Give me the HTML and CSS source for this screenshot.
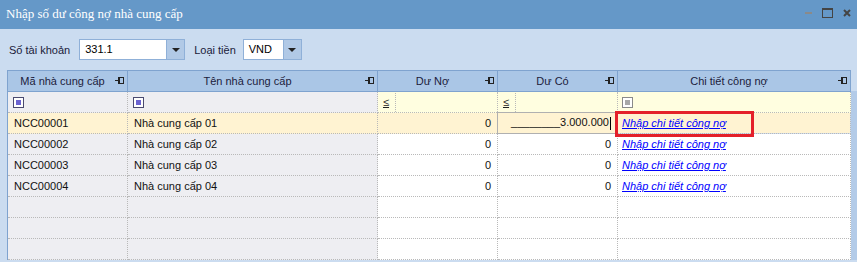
FILE: index.html
```html
<!doctype html>
<html lang="vi">
<head>
  <meta charset="utf-8" />
  <title>Nhập số dư công nợ nhà cung cấp</title>
  <link rel="stylesheet" href="styles.css">
</head>
<body>
  <div class="titlebar">
    <span class="title">Nhập số dư công nợ nhà cung cấp</span>
    <div class="winbtns">
      <span class="wmin"></span>
      <span class="wmax"></span>
      <svg class="wclose" width="8" height="8" viewBox="0 0 8 8"><path d="M1 1L7 7M7 1L1 7" stroke="#444" stroke-width="2"/></svg>
    </div>
  </div>

  <div class="toolbar">
    <label class="lbl">Số tài khoản</label>
    <div class="combo c1"><span class="val">331.1</span><span class="drop"><i></i></span></div>
    <label class="lbl">Loại tiền</label>
    <div class="combo c2"><span class="val">VND</span><span class="drop"><i></i></span></div>
  </div>

  <div class="gridwrap">
    <table class="grid">
      <colgroup>
        <col class="w1"><col class="w2"><col class="w3"><col class="w4"><col class="w5">
      </colgroup>
      <thead>
        <tr>
          <th>Mã nhà cung cấp<span class="pin"></span></th>
          <th>Tên nhà cung cấp<span class="pin"></span></th>
          <th>Dư Nợ<span class="pin"></span></th>
          <th>Dư Có<span class="pin"></span></th>
          <th>Chi tiết công nợ<span class="pin"></span></th>
        </tr>
      </thead>
      <tbody>
        <tr class="filter">
          <td class="gray"><span class="chk"></span></td>
          <td class="gray"><span class="chk"></span></td>
          <td class="yel"><span class="op">≤</span></td>
          <td class="yel"><span class="op">≤</span></td>
          <td class="yel"><span class="chk off"></span></td>
        </tr>
        <tr class="sel">
          <td>NCC00001</td>
          <td>Nhà cung cấp 01</td>
          <td class="num">0</td>
          <td class="num edit">________3.000.000<span class="caret"></span></td>
          <td class="mark"><a href="#">Nhập chi tiết công nợ</a><span class="redbox"></span></td>
        </tr>
        <tr>
          <td class="gray">NCC00002</td>
          <td class="gray">Nhà cung cấp 02</td>
          <td class="num">0</td>
          <td class="num">0</td>
          <td><a href="#">Nhập chi tiết công nợ</a></td>
        </tr>
        <tr>
          <td class="gray">NCC00003</td>
          <td class="gray">Nhà cung cấp 03</td>
          <td class="num">0</td>
          <td class="num">0</td>
          <td><a href="#">Nhập chi tiết công nợ</a></td>
        </tr>
        <tr>
          <td class="gray">NCC00004</td>
          <td class="gray">Nhà cung cấp 04</td>
          <td class="num">0</td>
          <td class="num">0</td>
          <td><a href="#">Nhập chi tiết công nợ</a></td>
        </tr>
        <tr><td class="gray"></td><td class="gray"></td><td></td><td></td><td></td></tr>
        <tr><td class="gray"></td><td class="gray"></td><td></td><td></td><td></td></tr>
        <tr><td class="gray"></td><td class="gray"></td><td></td><td></td><td></td></tr>
      </tbody>
    </table>
    <div class="vstrip"></div>
  </div>
</body>
</html>
```

FILE: styles.css
```css
:root{ --bar:#6598c8; --bg:#cbdcf0; --head:#aac6e6; --line:#7fa3cf; --dot:#b9b9b9; --gray:#eeeef2; --yel:#fffee0; --sel:#fff3d2; }
*,*::before,*::after{box-sizing:border-box}
body{margin:0;width:857px;height:262px;overflow:hidden;background:var(--bg);font-family:"Liberation Sans",Arial,sans-serif;font-size:11px;color:#1a1a3a}

.titlebar{height:29px;background:var(--bar);display:flex;align-items:center;justify-content:space-between;padding:0 6px 0 6px}
.title{font-family:"Liberation Serif","Times New Roman",serif;font-size:13px;color:#fff;margin-top:-2px}
.winbtns{display:flex;align-items:center;gap:10px;margin-top:-4px}
.wmin{width:7px;height:2px;background:#8a8a8a;margin-top:1px}
.wmax{width:11px;height:10px;border:1px solid #444;border-top-width:2px}
.wclose{display:block}

.toolbar{height:41px;display:flex;align-items:center;padding:0 0 0 9px}
.lbl{font-size:11px;color:#1a1a3a}
.combo{height:21px;border:1px solid #8fb0d8;background:#fff;display:flex;align-items:stretch}
.c1{width:106px;margin:0 9px 0 9px}
.c2{width:59px;margin-left:7px}
.combo .val{flex:1;padding:3px 0 0 5px;font-size:11px;color:#000}
.drop{width:18px;background:#b1c9e6;border-left:1px solid #8fb0d8;display:flex;align-items:center;justify-content:center}
.drop i{width:0;height:0;border-left:4px solid transparent;border-right:4px solid transparent;border-top:4px solid #222}

.gridwrap{display:flex;margin-left:7px}
.grid{border-collapse:collapse;table-layout:fixed;width:843px;border-left:1px solid var(--line)}
.w1{width:120px}.w2{width:250px}.w3{width:120px}.w4{width:120px}.w5{width:233px}
.grid th{height:21px;background:var(--head);font-weight:normal;font-size:11px;color:#1c1c3c;border:1px solid var(--line);position:relative;text-align:center;padding:0 10px 0 0}
.pin{position:absolute;right:3px;top:6px;width:9px;height:7px}
.pin::before{content:"";position:absolute;left:0;top:3px;width:3px;border-top:1px solid #222}
.pin::after{content:"";position:absolute;left:3px;top:0;width:6px;height:7px;border:1px solid #222;border-left-width:2px;background:transparent}

.grid td{height:21px;padding:0 0 0 6px;border-right:1px dotted var(--dot);border-bottom:1px dotted var(--dot);white-space:nowrap;overflow:visible;background:#fff;font-size:11px;color:#111}
.grid td.gray{background:var(--gray)}
.grid td.yel{background:var(--yel)}
.filter td{padding-left:5px}
.chk{display:inline-block;width:11px;height:11px;border:1px solid #4a4a70;background:#fff;vertical-align:middle;position:relative}
.chk::after{content:"";position:absolute;left:2px;top:2px;width:5px;height:5px;background:#6a62d0}
.chk.off{border-color:#8a8a8a}
.chk.off::after{background:#a8a8a8}
.op{display:inline-block;width:13px;height:19px;line-height:19px;text-decoration:underline;color:#222;border-right:1px dotted var(--dot)}

.grid tr.sel td{background:var(--sel)}
.grid td.num{text-align:right;padding:0 6px 0 0}
.grid tr.sel td.edit{border:1px solid #b0b0b0;padding-right:6px}
.caret{display:inline-block;width:1px;height:13px;background:#000;vertical-align:middle;margin-left:1px}
.grid a{color:#0000ff;font-style:italic;text-decoration:underline}
.grid td.mark{position:relative}
.grid td:nth-child(5){padding-left:4px}
.redbox{position:absolute;left:-3px;top:-2px;width:139px;height:26px;border:3px solid #e4202a}
.vstrip{width:7px;background:#b3cbe8;margin-top:21px}
```
